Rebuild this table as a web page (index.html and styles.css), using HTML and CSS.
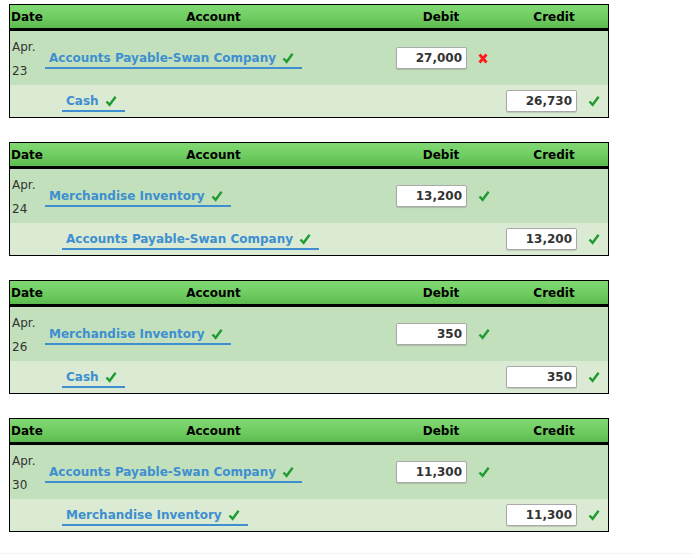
FILE: index.html
```html
<!DOCTYPE html>
<html>
<head>
<meta charset="utf-8">
<link rel="stylesheet" href="styles.css">
</head>
<body>
<div class="page">

  <div class="journal">
    <div class="row head">
      <div class="c-date">Date</div>
      <div class="c-title">Account</div>
      <div class="c-title">Debit</div>
      <div class="c-title">Credit</div>
    </div>
    <div class="row debit-row">
      <div class="c-date date">Apr.<br>23</div>
      <div class="c-acct"><span class="acct">Accounts Payable-Swan Company <svg class="ok" viewBox="0 0 12 12"><path d="M1.5 6.5 L4.6 9.8 L10.6 1.8"/></svg></span></div>
      <div class="c-debit amt"><span class="box">27,000</span><svg class="bad" viewBox="0 0 10 11"><path d="M1.5 1.5 L8.5 9.5 M8.5 1.5 L1.5 9.5"/></svg></div>
      <div class="c-credit amt"></div>
    </div>
    <div class="row credit-row">
      <div class="c-date"></div>
      <div class="c-acct"><span class="acct indent">Cash <svg class="ok" viewBox="0 0 12 12"><path d="M1.5 6.5 L4.6 9.8 L10.6 1.8"/></svg></span></div>
      <div class="c-debit amt"></div>
      <div class="c-credit amt"><span class="box">26,730</span><svg class="ok" viewBox="0 0 12 12"><path d="M1.5 6.5 L4.6 9.8 L10.6 1.8"/></svg></div>
    </div>
  </div>

  <div class="journal">
    <div class="row head">
      <div class="c-date">Date</div>
      <div class="c-title">Account</div>
      <div class="c-title">Debit</div>
      <div class="c-title">Credit</div>
    </div>
    <div class="row debit-row">
      <div class="c-date date">Apr.<br>24</div>
      <div class="c-acct"><span class="acct">Merchandise Inventory <svg class="ok" viewBox="0 0 12 12"><path d="M1.5 6.5 L4.6 9.8 L10.6 1.8"/></svg></span></div>
      <div class="c-debit amt"><span class="box">13,200</span><svg class="ok" viewBox="0 0 12 12"><path d="M1.5 6.5 L4.6 9.8 L10.6 1.8"/></svg></div>
      <div class="c-credit amt"></div>
    </div>
    <div class="row credit-row">
      <div class="c-date"></div>
      <div class="c-acct"><span class="acct indent">Accounts Payable-Swan Company <svg class="ok" viewBox="0 0 12 12"><path d="M1.5 6.5 L4.6 9.8 L10.6 1.8"/></svg></span></div>
      <div class="c-debit amt"></div>
      <div class="c-credit amt"><span class="box">13,200</span><svg class="ok" viewBox="0 0 12 12"><path d="M1.5 6.5 L4.6 9.8 L10.6 1.8"/></svg></div>
    </div>
  </div>

  <div class="journal">
    <div class="row head">
      <div class="c-date">Date</div>
      <div class="c-title">Account</div>
      <div class="c-title">Debit</div>
      <div class="c-title">Credit</div>
    </div>
    <div class="row debit-row">
      <div class="c-date date">Apr.<br>26</div>
      <div class="c-acct"><span class="acct">Merchandise Inventory <svg class="ok" viewBox="0 0 12 12"><path d="M1.5 6.5 L4.6 9.8 L10.6 1.8"/></svg></span></div>
      <div class="c-debit amt"><span class="box">350</span><svg class="ok" viewBox="0 0 12 12"><path d="M1.5 6.5 L4.6 9.8 L10.6 1.8"/></svg></div>
      <div class="c-credit amt"></div>
    </div>
    <div class="row credit-row">
      <div class="c-date"></div>
      <div class="c-acct"><span class="acct indent">Cash <svg class="ok" viewBox="0 0 12 12"><path d="M1.5 6.5 L4.6 9.8 L10.6 1.8"/></svg></span></div>
      <div class="c-debit amt"></div>
      <div class="c-credit amt"><span class="box">350</span><svg class="ok" viewBox="0 0 12 12"><path d="M1.5 6.5 L4.6 9.8 L10.6 1.8"/></svg></div>
    </div>
  </div>

  <div class="journal">
    <div class="row head">
      <div class="c-date">Date</div>
      <div class="c-title">Account</div>
      <div class="c-title">Debit</div>
      <div class="c-title">Credit</div>
    </div>
    <div class="row debit-row">
      <div class="c-date date">Apr.<br>30</div>
      <div class="c-acct"><span class="acct">Accounts Payable-Swan Company <svg class="ok" viewBox="0 0 12 12"><path d="M1.5 6.5 L4.6 9.8 L10.6 1.8"/></svg></span></div>
      <div class="c-debit amt"><span class="box">11,300</span><svg class="ok" viewBox="0 0 12 12"><path d="M1.5 6.5 L4.6 9.8 L10.6 1.8"/></svg></div>
      <div class="c-credit amt"></div>
    </div>
    <div class="row credit-row">
      <div class="c-date"></div>
      <div class="c-acct"><span class="acct indent">Merchandise Inventory <svg class="ok" viewBox="0 0 12 12"><path d="M1.5 6.5 L4.6 9.8 L10.6 1.8"/></svg></span></div>
      <div class="c-debit amt"></div>
      <div class="c-credit amt"><span class="box">11,300</span><svg class="ok" viewBox="0 0 12 12"><path d="M1.5 6.5 L4.6 9.8 L10.6 1.8"/></svg></div>
    </div>
  </div>

</div>
<div class="page-end"></div>
</body>
</html>
```

FILE: styles.css
```css
html, body {
  margin: 0;
  padding: 0;
  background: #fff;
}
body {
  font-family: "DejaVu Sans", Verdana, sans-serif;
  font-size: 12px;
  color: #333;
}
.page {
  padding: 4px 0 0 9px;
  display: flex;
  flex-direction: column;
  gap: 24px;
}
.journal {
  width: 598px;
  border: 1px solid #000;
}
.row {
  display: grid;
  grid-template-columns: 35px 337px 118px 108px;
  align-items: center;
}
.head {
  height: 23px;
  border-bottom: 3px solid #000;
  background: linear-gradient(to bottom, #82d874 0%, #72cf64 45%, #5cbb4e 100%);
  font-weight: bold;
  color: #000;
}
.head .c-date {
  padding-left: 1px;
}
.c-title {
  text-align: center;
}
.debit-row {
  height: 54px;
  background: #c2e0bc;
}
.credit-row {
  height: 32px;
  background: #dbead2;
}
.date {
  align-self: start;
  padding: 4px 0 0 2px;
  line-height: 24px;
  color: #333;
}
.c-acct {
  display: flex;
  align-items: center;
}
.acct {
  display: inline-flex;
  align-items: center;
  gap: 6px;
  height: 18px;
  line-height: 18px;
  padding: 0 8px 0 4px;
  border-bottom: 2px solid #3f8fd0;
  font-weight: bold;
  color: #3d8fd0;
  white-space: nowrap;
  margin-top: 2px;
}
.acct.indent {
  margin-left: 17px;
}
.amt {
  display: flex;
  align-items: center;
  gap: 11px;
}
.c-debit.amt {
  padding-left: 14px;
}
.c-credit.amt {
  padding-left: 6px;
}
.box {
  box-sizing: border-box;
  width: 71px;
  height: 22px;
  line-height: 20px;
  padding-right: 4px;
  text-align: right;
  background: #fff;
  border: 1px solid #a9a9a9;
  border-radius: 2px;
  box-shadow: 0 1px 1px rgba(0, 0, 0, 0.15);
  font-weight: bold;
  color: #333;
}
.ok {
  width: 12px;
  height: 12px;
  flex: none;
}
.ok path {
  fill: none;
  stroke: #1e9b31;
  stroke-width: 2.4;
}
.bad {
  width: 10px;
  height: 11px;
  flex: none;
}
.bad path {
  fill: none;
  stroke: #ff1a1a;
  stroke-width: 2.8;
}
.page-end {
  margin-top: 21px;
  height: 3px;
  background: #f4f4f4;
}
```
